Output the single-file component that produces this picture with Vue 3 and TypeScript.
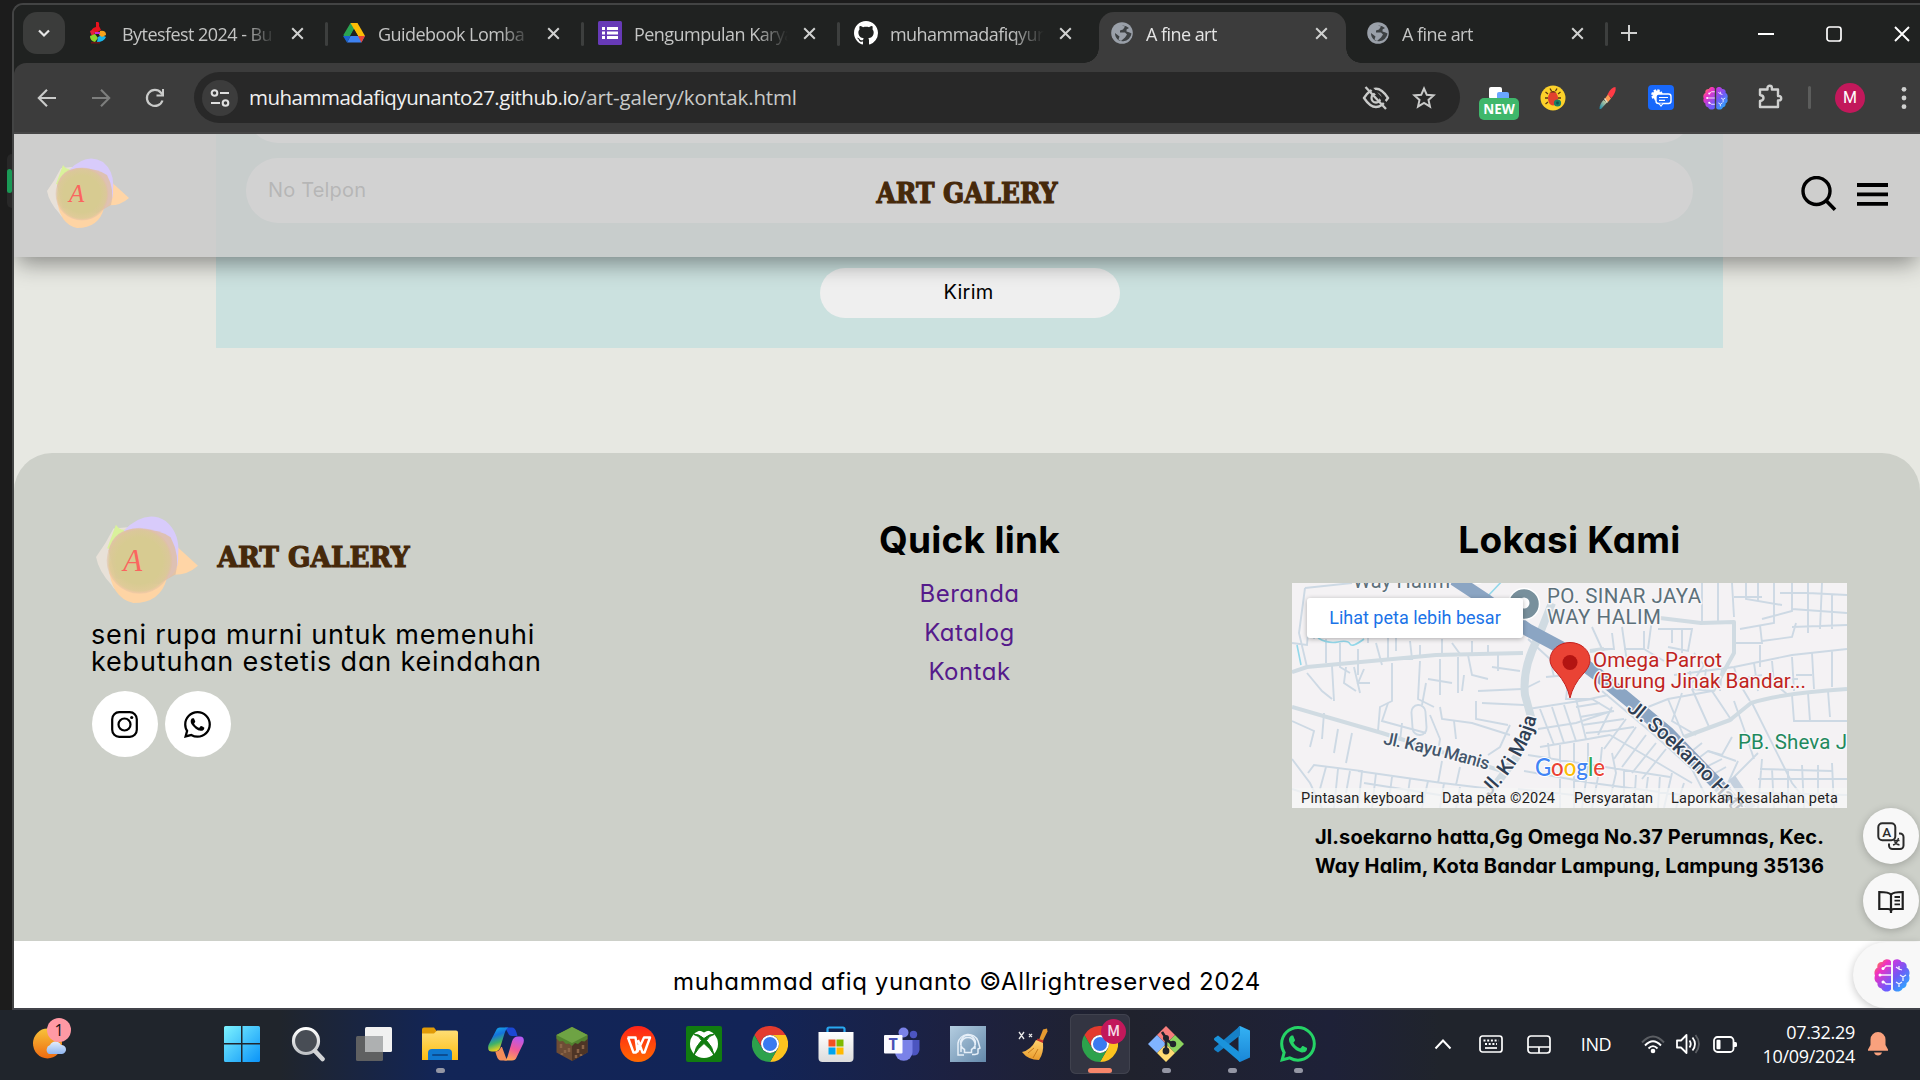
<script setup lang="ts">
interface Tab {
  title: string
  icon: string
  active?: boolean
}
interface TaskItem {
  icon: string
  state?: 'open' | 'active'
}

const tabs: Tab[] = [
  { title: 'Bytesfest 2024 - Bu', icon: 'bytes' },
  { title: 'Guidebook Lomba', icon: 'drive' },
  { title: 'Pengumpulan Karya', icon: 'forms' },
  { title: 'muhammadafiqyun', icon: 'github' },
  { title: 'A fine art', icon: 'globe', active: true },
  { title: 'A fine art', icon: 'globe' },
]

const links: string[] = ['Beranda', 'Katalog', 'Kontak']

const taskItems: TaskItem[] = [
  { icon: 'windows' },
  { icon: 'lens' },
  { icon: 'taskview' },
  { icon: 'explorer', state: 'open' },
  { icon: 'copilot' },
  { icon: 'minecraft' },
  { icon: 'wps' },
  { icon: 'xbox' },
  { icon: 'chrome' },
  { icon: 'store' },
  { icon: 'teams' },
  { icon: 'portrait' },
  { icon: 'broom' },
  { icon: 'chrome', state: 'active' },
  { icon: 'git', state: 'open' },
  { icon: 'vscode', state: 'open' },
  { icon: 'whatsapp', state: 'open' },
]

const mapStreets: string[] = [
  'M13 5L60 0M13 5L7 50L15 84L0 89M24 20L22 56M0 60L15 62L16 50M34 56V80M48 60V84L58 90M66 66V92M76 54V60',
  'M84 60L90 82M96 54V76H120L118 58M104 54V68M128 62V73M150 56V71M160 60L168 71M180 58V70M196 62V69',
  'M15 90L30 108L40 116M40 83L42 118M54 84L52 100L64 108M62 84L68 110M72 86L66 100H78M100 80V118L88 124L86 148M128 78L126 116L142 124M148 76V112M136 96L160 100M176 72L180 92L196 96M186 108L230 106M190 120L232 122M184 118V136L216 142',
  'M96 120L90 138L134 150M138 132L148 156L146 170M148 124L150 136L180 140L218 152M162 138L164 156M218 142L208 164L196 172M130 122L134 100M110 140L108 158M166 74V110M200 84L228 88M206 72V88M172 92L170 108',
  'M32 130L30 156M0 138L22 148L18 164M46 146L42 170M60 150L54 180M0 176L18 200L30 225M16 190L22 182L70 188L66 225M34 184L28 206M46 186L42 225M58 188L54 210',
  'M66 188L150 200L200 206M72 200L160 214L196 222M84 190L80 225M100 194L96 225M118 196L114 225M136 198L130 225M152 200L148 225M168 204L164 225M0 206L24 214L60 218M150 178L146 200M168 184L164 202',
  'M236 126L300 116L320 128L284 140L246 146M248 126L262 162M260 124L272 160M272 122L284 158M284 116L294 156M248 164L296 156L318 152M284 124L308 120M288 134L322 128M290 142L332 136M294 150L316 148L342 144',
  'M276 98L274 116L298 116L316 112M254 94L276 92M232 106L248 98M236 56L258 76L262 94M310 108L360 150L400 186L420 225M320 124L306 152M334 136L312 166M344 144L322 176M354 152L330 184M364 160L340 190M374 166L350 196M318 152L366 180L400 200',
  'M256 160L258 178M268 162V225M282 160V225M296 160V184L290 225M310 164L308 184L300 225M320 170L324 190L316 225M332 186V225M344 192L342 225M356 194L352 225M368 192L366 225M236 172L300 182L378 194M232 188L300 200L390 212M226 206L300 214M380 190L372 225M392 200L384 225',
  'M300 44L310 66H322L320 50M330 44L336 86M332 66H352M318 66L298 68M352 48V66L372 78M360 36L356 66M366 46H400L396 68L376 64M390 46V70M380 46V60M410 0V38M402 70L412 82L400 100',
  'M426 0V38M440 0L442 34M442 14H470M454 0V16L490 22M466 0V18M482 0V40L448 46M500 0V28L470 36M516 0V50M530 0L528 46M488 10H516M500 26L555 30M516 10L555 12M540 12V46M442 60H470L468 42M470 58L500 54L504 40M500 44L555 42M468 62V84',
  'M382 92L442 84L500 72L555 66M398 88L400 106L422 108M414 86L412 102M430 84L428 108M442 84L446 98L458 118M462 80L466 108M480 78L482 100L496 112M500 74L502 108M520 70L522 106M540 68V104M484 96H506M504 92H520M446 96L470 92',
  'M500 112L502 138H555M516 110L518 138M536 108L538 134M376 116L392 154M390 110L380 138L404 152M400 106L418 146M356 124L376 116L420 108M420 108L440 138M442 118L452 146L462 176M460 120L500 200L520 225M440 154L430 172L416 168M446 178L436 200L466 170',
  'M470 176L466 225M480 186L482 225M496 186V225M510 182L512 225M526 182V210M540 180L542 225M466 196H555M464 210L555 212M400 180L416 168L444 178M410 186L430 176M420 192L434 184M436 200L446 225M468 186L540 188M395 172L410 160',
]
</script>

<template>
  <div class="desktop">
    <svg class="defs" width="0" height="0" aria-hidden="true">
      <defs>
        <linearGradient id="gWin" x1="0" y1="0" x2="1" y2="1"><stop offset="0" stop-color="#7df3ff" /><stop offset="1" stop-color="#0a93f8" /></linearGradient>
        <linearGradient id="gLens" x1="0" y1="0" x2="0" y2="1"><stop offset="0" stop-color="#fff" /><stop offset="1" stop-color="#bfc2c6" /></linearGradient>
        <linearGradient id="gFolder" x1="0" y1="0" x2="0" y2="1"><stop offset="0" stop-color="#ffde74" /><stop offset="1" stop-color="#fbbd12" /></linearGradient>
        <linearGradient id="gWps" x1="0" y1="0" x2="0" y2="1"><stop offset="0" stop-color="#ff2318" /><stop offset="1" stop-color="#ff6a00" /></linearGradient>
        <linearGradient id="gBrainL" x1="0" y1="0" x2=".6" y2="1"><stop offset="0" stop-color="#ff9a1f" /><stop offset=".4" stop-color="#f02fc2" /><stop offset="1" stop-color="#6a5cff" /></linearGradient>
        <linearGradient id="gBrainR" x1="0" y1="0" x2=".5" y2="1"><stop offset="0" stop-color="#d235dd" /><stop offset=".5" stop-color="#7159f5" /><stop offset="1" stop-color="#2fa4ff" /></linearGradient>
        <linearGradient id="gCopA" x1="0" y1="0" x2=".3" y2="1"><stop offset="0" stop-color="#13b7ee" /><stop offset=".4" stop-color="#1673dd" /><stop offset=".7" stop-color="#3fb268" /><stop offset="1" stop-color="#f2d21a" /></linearGradient>
        <linearGradient id="gCopB" x1=".6" y1="0" x2=".3" y2="1"><stop offset="0" stop-color="#b659f2" /><stop offset=".5" stop-color="#f0589a" /><stop offset="1" stop-color="#ffa552" /></linearGradient>
        <linearGradient id="gSun" x1="0" y1="0" x2="0" y2="1"><stop offset="0" stop-color="#f8c33a" /><stop offset="1" stop-color="#ee6a10" /></linearGradient>
        <linearGradient id="gCloud" x1="0" y1="0" x2="0" y2="1"><stop offset="0" stop-color="#e4eefc" /><stop offset="1" stop-color="#8fb6f0" /></linearGradient>
        <linearGradient id="gPort" x1="0" y1="0" x2="1" y2="1"><stop offset="0" stop-color="#b4cde0" /><stop offset="1" stop-color="#6489ab" /></linearGradient>
        <linearGradient id="gBrush" x1="1" y1="0" x2="0" y2="1"><stop offset="0" stop-color="#e8d9a0" /><stop offset="1" stop-color="#1387a8" /></linearGradient>
        <linearGradient id="gStore" x1="0" y1="0" x2="0" y2="1"><stop offset="0" stop-color="#fff" /><stop offset="1" stop-color="#dcdcdc" /></linearGradient>
        <linearGradient id="gBroom" x1="0" y1="0" x2="0" y2="1"><stop offset="0" stop-color="#ffd36e" /><stop offset="1" stop-color="#e99b2c" /></linearGradient>
        <linearGradient id="gCode" x1="0" y1="0" x2="0" y2="1"><stop offset="0" stop-color="#34b2f4" /><stop offset="1" stop-color="#1a86d6" /></linearGradient>
        <radialGradient id="gCore"><stop offset=".7" stop-color="#d7cb91" /><stop offset=".92" stop-color="#dac996" stop-opacity=".85" /><stop offset="1" stop-color="#e2bda4" stop-opacity=".4" /></radialGradient>
        <symbol id="brain" viewBox="0 0 36 34">
          <path d="M17 3.500C16 .8 10 .2 8.500 4 5 3.500 2.500 6.500 3.500 9.500.500 11-.2 15 1 17.500-.2 21 1 24 3.500 25c-.7 3.500 2 5.500 4 5.500 1.500 4 8 4 9.500.8z" fill="url(#gBrainL)" />
          <path d="M19 3.500C20 .8 26 .2 27.500 4 31 3.500 33.500 6.500 32.500 9.500c3 1.500 3.700 5.500 2.500 8 1.200 3.500 0 6.500-2.500 7.500.7 3.500-2 5.500-4 5.500-1.500 4-8 4-9.500.8z" fill="url(#gBrainR)" />
          <g fill="none" stroke="#fff" stroke-opacity=".9" stroke-width="1.300">
            <path d="M17 8h-5l-3 3M17 17H6M17 26h-5l-3-3M22 9l3 2v-3m0 3 3 1M26 17l3 2 3-2m-3 2v4M22 24l3 2 3-2m-3 2v3" />
          </g>
          <g fill="#fff"><circle cx="9" cy="10.500" r="1.500" /><circle cx="6" cy="17" r="1.500" /><circle cx="9" cy="24" r="1.500" /></g>
        </symbol>
        <symbol id="chromeLogo" viewBox="0 0 48 48">
          <path d="M3.200 12A24 24 0 0 1 44.800 12H24A12 12 0 0 0 13.600 30z" fill="#e33b2e" />
          <path d="M44.800 12A24 24 0 0 1 24 48L34.400 30A12 12 0 0 0 24 12z" fill="#fcc31e" />
          <path d="M24 48A24 24 0 0 1 3.200 12L13.600 30A12 12 0 0 0 34.400 30z" fill="#2da24c" />
          <circle cx="24" cy="24" r="12" fill="#fff" /><circle cx="24" cy="24" r="9.400" fill="#3a7af0" />
        </symbol>
        <symbol id="blob" viewBox="0 0 82 70">
          <path d="M0 33Q8 22 14 10L36 8 34 60Q18 66 12 55Q2 44 0 33z" fill="#ece4da" opacity=".85" />
          <path d="M9 26L16 7Q20 13 26 10L20 30z" fill="#d9f29b" />
          <path d="M60 20L82 40Q72 49 58 47z" fill="#ffd5a6" />
          <path d="M22 12Q40-6 56 4Q68 14 66 32Q67 44 58 50Q40 20 22 12z" fill="#d8cbfb" />
          <path d="M10 40Q12 66 30 70Q52 70 57 50L50 30L14 30z" fill="#fed4a4" />
          <path d="M10 28Q14 10 34 10Q52 11 60 17Q68 32 64 47L50 55L16 50Z" fill="#dfbfa6" opacity=".85" />
          <circle cx="35" cy="36" r="26.500" fill="url(#gCore)" />
          <text x="22" y="44" font-family="'Liberation Serif', serif" font-style="italic" font-size="25" fill="#fb655f">A</text>
        </symbol>
        <symbol id="whatsappMark" viewBox="0 0 16 16">
          <path d="M13.601 2.326A7.85 7.850 0 0 0 7.994 0C3.627 0 .068 3.558.064 7.926c0 1.399.366 2.760 1.057 3.965L0 16l4.204-1.102a7.900 7.900 0 0 0 3.790.965h.004c4.368 0 7.926-3.558 7.930-7.930A7.900 7.900 0 0 0 13.600 2.326zM7.994 14.521a6.600 6.600 0 0 1-3.356-.92l-.24-.144-2.494.654.666-2.433-.156-.251a6.560 6.560 0 0 1-1.007-3.505c0-3.626 2.957-6.584 6.591-6.584a6.560 6.560 0 0 1 4.660 1.931 6.560 6.560 0 0 1 1.928 4.660c-.004 3.639-2.961 6.592-6.592 6.592m3.615-4.934c-.197-.099-1.170-.578-1.353-.646-.182-.065-.315-.099-.445.099-.133.197-.513.646-.627.775-.114.133-.232.148-.43.050-.197-.1-.836-.308-1.592-.985-.59-.525-.985-1.175-1.103-1.372-.114-.198-.011-.304.088-.403.087-.088.197-.232.296-.346.1-.114.133-.198.198-.33.065-.134.034-.248-.015-.347-.05-.099-.445-1.076-.612-1.470-.16-.389-.323-.335-.445-.34-.114-.007-.247-.007-.38-.007a.73.730 0 0 0-.529.247c-.182.198-.691.677-.691 1.654s.71 1.916.81 2.049c.098.133 1.394 2.132 3.383 2.992.47.205.84.326 1.129.418.475.152.904.129 1.246.080.38-.058 1.171-.48 1.338-.943.164-.464.164-.86.114-.943-.049-.084-.182-.133-.38-.232" />
        </symbol>
      </defs>
    </svg>

    <div class="upper">
      <div class="edge"><span class="edge-box"><i></i></span></div>
      <div class="window">
        <div class="tabstrip">
          <span class="tabsearch"><svg width="14" height="14" viewBox="0 0 14 14"><path d="M2 4.500l5 5 5-5" fill="none" stroke="#e6e6e6" stroke-width="2.200" /></svg></span>
          <div class="tabs">
            <div v-for="(t, i) in tabs" :key="i" class="tab" :class="{ active: t.active, nosep: t.active || tabs[i + 1]?.active }">
              <div v-if="t.active" class="tab-bg"></div>
              <span class="fav">
                <svg v-if="t.icon === 'bytes'" width="18" height="22" viewBox="0 0 18 22">
                  <path d="M7 0q4-1 3 4l2 4-5 3-5 0q0-5 5-6z" fill="#e8121d" />
                  <path d="M1 9q3-2 5 1l-1 5q-3-1-4-6z" fill="#e3203a" />
                  <path d="M1 14l5-2 3 4-3 4q-5-1-5-6z" fill="#8bd42b" />
                  <path d="M9 15l4-2 4 2q-2 5-9 5z" fill="#19b6ea" />
                  <path d="M11 9q6-1 6 4l-4 2-3-2z" fill="#f5a21a" />
                  <path d="M6 10h5v2H6z" fill="#c72bd2" /><path d="M2 20h9v1.500H2z" fill="#6c1717" />
                </svg>
                <svg v-else-if="t.icon === 'drive'" width="22" height="20" viewBox="0 0 22 20">
                  <path d="M7.500 0h7l-3.600 6.200L4 18.500.4 12z" fill="#2aa352" />
                  <path d="M7.500 0h7L22 13h-7z" fill="#fdbd05" /><path d="M4 19.500L7.500 13H22l-3.600 6.500z" fill="#3e82f1" />
                  <path d="M15 13h7l-3.600 6.500z" fill="#ea4435" /><path d="M0 13h7.500L4 19.500z" fill="#1b63d0" /><path d="M11 6.200L15 13H7.200z" fill="#202221" />
                </svg>
                <svg v-else-if="t.icon === 'forms'" width="24" height="24" viewBox="0 0 24 24">
                  <rect width="24" height="24" rx="1.500" fill="#673ab7" />
                  <path d="M4 6h3v3H4zM9 6h11v3H9zM4 10.500h3v3H4zM9 10.500h11v3H9zM4 15h3v3H4zM9 15h11v3H9z" fill="#fff" />
                </svg>
                <svg v-else-if="t.icon === 'github'" width="24" height="24" viewBox="0 0 16 16">
                  <path fill="#fff" d="M8 0C3.580 0 0 3.580 0 8c0 3.540 2.290 6.530 5.470 7.590.4.070.55-.17.55-.38 0-.19-.01-.82-.01-1.490-2.010.37-2.530-.49-2.690-.94-.09-.23-.48-.94-.82-1.130-.28-.15-.68-.52-.01-.53.63-.01 1.080.58 1.230.82.72 1.210 1.870.87 2.330.66.070-.52.28-.87.51-1.070-1.780-.2-3.640-.89-3.640-3.950 0-.87.31-1.590.82-2.150-.08-.2-.36-1.020.08-2.120 0 0 .67-.21 2.200.82.64-.18 1.320-.27 2-.27s1.360.09 2 .27c1.530-1.040 2.200-.82 2.200-.82.44 1.100.16 1.920.08 2.120.51.56.82 1.270.82 2.150 0 3.070-1.870 3.750-3.650 3.950.29.25.54.73.54 1.480 0 1.070-.01 1.930-.01 2.200 0 .21.15.46.55.38A8.010 8.010 0 0 0 16 8c0-4.420-3.580-8-8-8z" />
                </svg>
                <svg v-else width="22" height="22" viewBox="0 0 22 22">
                  <circle cx="11" cy="11" r="10.800" fill="#9aa0a9" />
                  <path d="M11 3.500l3 1-2 3-3 1v2h5l2 2-2 3-4 3.500-2.500-1.500 1-3-4.500-3.500a8.500 8.500 0 0 0 4 7.500q2 1 4.500.8a9 9 0 0 0 8-7.800l-2-1-3-1 0-2 2.500-1.500A9 9 0 0 0 11 3.500z" fill="#35383b" opacity=".92" />
                </svg>
              </span>
              <span class="tab-title">{{ t.title }}</span>
              <svg class="tab-x" width="13" height="13" viewBox="0 0 13 13"><path d="M1.200 1.200l10.600 10.600M11.800 1.200L1.200 11.800" stroke="currentColor" stroke-width="2" /></svg>
            </div>
          </div>
          <svg class="plus" width="16" height="16" viewBox="0 0 16 16"><path d="M8 0v16M0 8h16" stroke="#d0d1d0" stroke-width="2" /></svg>
          <div class="winctl">
            <svg width="16" height="16" viewBox="0 0 16 16"><path d="M0 8h16" stroke="#fff" stroke-width="2" /></svg>
            <svg width="16" height="16" viewBox="0 0 16 16"><rect x="1" y="1" width="14" height="14" rx="2.500" fill="none" stroke="#fff" stroke-width="1.700" /></svg>
            <svg width="16" height="16" viewBox="0 0 16 16"><path d="M1 1l14 14M15 1L1 15" stroke="#fff" stroke-width="1.900" /></svg>
          </div>
        </div>

        <div class="toolbar">
          <div class="navs">
            <svg width="20" height="20" viewBox="0 0 20 20"><path d="M19 10H2.500M10 1.800L1.800 10 10 18.200" fill="none" stroke="#cacbca" stroke-width="2.100" /></svg>
            <svg width="20" height="20" viewBox="0 0 20 20"><path d="M1 10h16.500M10 1.800l8.200 8.200-8.200 8.200" fill="none" stroke="#7d7e7d" stroke-width="2.100" /></svg>
            <svg width="20" height="20" viewBox="0 0 20 20"><path d="M17.500 12.500A8 8 0 1 1 16 4.700L18 7" fill="none" stroke="#cacbca" stroke-width="2.200" /><path d="M19 1v7.500h-7.500v-2H17V1z" fill="#cacbca" /></svg>
          </div>
          <div class="omnibox">
            <span class="siteinfo"><svg width="20" height="20" viewBox="0 0 20 20" fill="none" stroke="#e0e0e0" stroke-width="2.100"><circle cx="4.500" cy="5" r="2.800" /><path d="M10 5h9M1 15h9" /><circle cx="15.500" cy="15" r="2.800" /></svg></span>
            <span class="url"><b>muhammadafiqyunanto27.github.io</b><i>/art-galery/kontak.html</i></span>
            <svg class="eye" width="28" height="24" viewBox="0 0 28 24" fill="none" stroke="#c9cac9" stroke-width="2.300"><path d="M2 12Q14-6.500 26 12Q14 30 2 12z" /><circle cx="14" cy="12" r="4.500" /><path d="M7.200-.5L26.500 20" stroke="#282828" stroke-width="2.600" /><path d="M3.500 1L24 23" /></svg>
            <svg width="24" height="24" viewBox="0 0 24 24"><path d="M12 2.500l2.800 6.300 6.800.6-5.100 4.500 1.500 6.700L12 17l-6 3.600 1.500-6.700-5.100-4.500 6.800-.6z" fill="none" stroke="#c9cac9" stroke-width="2" /></svg>
          </div>
          <div class="exts">
            <span class="newext">
              <svg width="22" height="14" viewBox="0 0 22 14"><rect x="1" y="0" width="13" height="12" rx="2" fill="#fff" /><rect x="9" y="5" width="12" height="10" rx="2" fill="#6aa6ff" /></svg>
              <b>NEW</b>
            </span>
            <svg width="26" height="26" viewBox="0 0 26 26"><circle cx="13" cy="13" r="12.500" fill="#fcd12a" /><path d="M8 9l-2.500-2m2.500 6H5m3 4l-2.500 2M18 9l2.500-2m-2.500 6h3m-9.500-7-1.500-2.500m5.500 2.500 1.500-2.500" stroke="#5c3613" stroke-width="1.300" /><ellipse cx="13" cy="13.500" rx="5" ry="7" fill="#e2412e" /><path d="M9.500 7.500a4 3 0 0 1 7 0z" fill="#5d3212" /><circle cx="17.500" cy="18" r="3.600" fill="#1a7f63" /><circle cx="17.500" cy="18" r="1.400" fill="#0f4f50" /></svg>
            <svg width="20" height="24" viewBox="0 0 20 24"><path d="M17.500 1q1 5-4 11l-4-3.500Q13 1 17.500 1z" fill="#ff3a45" /><path d="M13 12.500l-3 3.500-3-3.500 3-4z" fill="#ff9a55" /><path d="M9 16.500L3 23H1.500q0-5 4-9z" fill="url(#gBrush)" /><path d="M6 13l3 4 1-1-3-4z" fill="#efe9c8" /></svg>
            <svg width="26" height="25" viewBox="0 0 26 25"><rect width="26" height="25" rx="4" fill="#1868fb" /><circle cx="9" cy="10" r="4.500" fill="#fff" stroke="#fff" stroke-width="2.600" stroke-dasharray="2.200 1.300" /><rect x="8" y="9" width="15" height="9.500" rx="2.500" fill="#1868fb" stroke="#fff" stroke-width="1.400" /><path d="M11 12.500h9M11 15.300h6" stroke="#fff" stroke-width="1.200" /><path d="M11 18.500l2 2.500 2-2.500" fill="#1868fb" stroke="#fff" stroke-width="1.200" /></svg>
            <svg width="25" height="24"><use href="#brain" /></svg>
            <svg width="26" height="26" viewBox="0 0 26 26"><path d="M3 6.500h7.500V5a2.200 2.200 0 0 1 4.400 0v1.500H21V13h1a2.200 2.200 0 0 1 0 4.400h-1V24H3v-6q3.500-.5 3.500-3T3 12z" fill="none" stroke="#cfd0cf" stroke-width="2.400" stroke-linejoin="round" /></svg>
          </div>
          <span class="tsep"></span>
          <span class="avatar">M</span>
          <svg class="dots" width="6" height="24" viewBox="0 0 6 24" fill="#cfd0cf"><circle cx="3" cy="3.300" r="2.400" /><circle cx="3" cy="12" r="2.400" /><circle cx="3" cy="20.700" r="2.400" /></svg>
        </div>

        <div class="page">
          <header class="site-head">
            <svg class="head-logo" width="82" height="70"><use href="#blob" /></svg>
            <svg class="head-name" width="184" height="26" viewBox="0 0 184 26"><text x="1.500" y="22" textLength="181" lengthAdjust="spacingAndGlyphs">ART GALERY</text></svg>
            <div class="head-icons">
              <svg width="36" height="36" viewBox="0 0 36 36"><circle cx="15.500" cy="15" r="13.500" fill="none" stroke="#000" stroke-width="3.400" /><path d="M25 24.500l9 9.300" stroke="#000" stroke-width="3.600" /></svg>
              <svg width="31" height="23" viewBox="0 0 31 23"><path d="M0 2h31M0 11.400h31M0 20.800h31" stroke="#000" stroke-width="3.800" /></svg>
            </div>
          </header>

          <section class="form">
            <div class="field first"></div>
            <div class="field">No Telpon</div>
            <button class="send">Kirim</button>
          </section>

          <footer class="foot">
            <div class="brand">
              <div class="brand-row">
                <svg width="102" height="87"><use href="#blob" /></svg>
                <svg class="brand-name" width="196" height="28" viewBox="0 0 196 28"><text x="1.500" y="24.500" textLength="192" lengthAdjust="spacingAndGlyphs">ART GALERY</text></svg>
              </div>
              <p>seni rupa murni untuk memenuhi<br />kebutuhan estetis dan keindahan</p>
              <div class="socials">
                <span><svg width="27" height="27" viewBox="0 0 27 27" fill="none" stroke="#000" stroke-width="2.200"><rect x="1.200" y="1.200" width="24.600" height="24.600" rx="7" /><circle cx="13.500" cy="13.500" r="6" /><circle cx="20.700" cy="6.500" r="1.600" fill="#000" stroke="none" /></svg></span>
                <span><svg width="27" height="27"><use href="#whatsappMark" /></svg></span>
              </div>
            </div>
            <div class="quick">
              <h2>Quick link</h2>
              <a v-for="l in links" :key="l">{{ l }}</a>
            </div>
            <div class="place">
              <h2>Lokasi Kami</h2>
              <div class="map">
                <svg width="555" height="225" viewBox="0 0 555 225" font-family="Roboto, sans-serif">
                  <rect width="555" height="225" fill="#f4f2f4" />
                  <g fill="none" stroke="#cdd9e4" stroke-width="1.900">
                    <path v-for="(s, i) in mapStreets" :key="i" :d="s" />
                    <rect x="120" y="122" width="14" height="30" rx="7" transform="rotate(-4 127 137)" />
                  </g>
                  <path d="M26 55q10 6 20 4t12 2 14-5M5 62l4 20M195 14L212-4" fill="none" stroke="#93d8ea" stroke-width="1.600" />
                  <g fill="none" stroke="#d0dbe2" stroke-linejoin="round">
                    <path d="M260 20L246 55Q230 85 233 112L239 134L226 172L196 212" stroke-width="8" />
                    <path d="M0 124L90 150L210 188M392 154L438 137L459 120Q490 110 555 106M368 35L409 40L442 39V70L421 108M0 89L15 84L144 72L231 70M298 68L312 66" stroke-width="4" />
                  </g>
                  <path d="M162-4L194 17L236 47L268 64L306 92L340 120L376 150L430 206L450 229" fill="none" stroke="#8ba5c3" stroke-width="13" />
                  <path d="M440 195L460 225" stroke="#c4d0de" stroke-width="8" />
                  <g class="halo">
                    <text x="61" y="5" font-size="20" textLength="97" fill="#5c707a">Way Halim</text>
                    <text x="255" y="20" font-size="20.500" textLength="154" fill="#5c707a">PO. SINAR JAYA</text>
                    <text x="255" y="41" font-size="20.500" textLength="114" fill="#5c707a">WAY HALIM</text>
                    <text x="301" y="84" font-size="20.500" textLength="129" fill="#c02320">Omega Parrot</text>
                    <text x="301" y="105" font-size="20.500" textLength="213" fill="#c02320">(Burung Jinak Bandar...</text>
                    <text x="446" y="166" font-size="20.500" fill="#1f8a5e" textLength="109">PB. Sheva J</text>
                    <g font-size="17.500" font-weight="500" fill="#44566b">
                      <path id="kayu" d="M91 161Q142 171 200 188" fill="none" stroke="none" />
                      <text><textPath href="#kayu" textLength="108">Jl. Kayu Manis</textPath></text>
                    </g>
                    <g font-size="20" font-weight="500" fill="#2f3f54">
                      <path id="maja" d="M197 214Q238 172 246 128" fill="none" stroke="none" />
                      <text><textPath href="#maja" textLength="94">Jl. Ki Maja</textPath></text>
                      <path id="soek" d="M334 127Q392 172 452 240" fill="none" stroke="none" />
                      <text><textPath href="#soek" textLength="162">Jl. Soekarno Hatta</textPath></text>
                    </g>
                  </g>
                  <path d="M178-4a9 9 0 0 0 15 0z" fill="#8a9da6" stroke="#fff" stroke-width="2" />
                  <circle cx="232" cy="21" r="15.500" fill="#78909c" stroke="#fff" stroke-width="1.500" /><circle cx="232" cy="20" r="5.500" fill="#fff" />
                  <path d="M278 115Q275 101 265 90Q258 83 258 77A20 17.500 0 0 1 298 77Q298 84 291 91Q281 102 278 115z" fill="#ea4335" stroke="#c5221f" />
                  <circle cx="278" cy="79.500" r="7.500" fill="#b31412" />
                  <text x="243" y="193" font-size="24" textLength="70" lengthAdjust="spacingAndGlyphs" class="google"><tspan fill="#4285f4">G</tspan><tspan fill="#ea4335">o</tspan><tspan fill="#fbbc04">o</tspan><tspan fill="#4285f4">g</tspan><tspan fill="#34a853">l</tspan><tspan fill="#ea4335">e</tspan></text>
                  <rect y="205" width="555" height="20" fill="#f5f5f5" opacity=".72" />
                  <g font-size="14.500" fill="#222">
                    <text x="9" y="220" textLength="123">Pintasan keyboard</text>
                    <text x="150" y="220" textLength="113">Data peta ©2024</text>
                    <text x="282" y="220" textLength="79">Persyaratan</text>
                    <text x="379" y="220" textLength="167">Laporkan kesalahan peta</text>
                  </g>
                </svg>
                <span class="bigger">Lihat peta lebih besar</span>
              </div>
              <p>Jl.soekarno hatta,Gg Omega No.37 Perumnas, Kec.<br />Way Halim, Kota Bandar Lampung, Lampung 35136</p>
            </div>
          </footer>
          <div class="copy">muhammad afiq yunanto ©Allrightreserved 2024</div>

          <div class="floaters">
            <span class="fl"><svg width="28" height="29" viewBox="0 0 28 29" fill="none" stroke="#2b2b2b" stroke-width="2"><path d="M12 21.500v2a3.500 3.500 0 0 0 3.500 3.500h7.500a3.500 3.500 0 0 0 3.500-3.500V15a3.500 3.500 0 0 0-3.500-3.500h-1" /><rect x="1.300" y="1.300" width="17" height="17" rx="4" /><text x="9.800" y="14.700" text-anchor="middle" font-family="Roboto, sans-serif" font-size="13.500" font-weight="500" fill="#2b2b2b" stroke="none">A</text><path d="M16.500 18.500h6M21.500 16q-1.500 6-5.500 7M17.500 19.500q2 3 5 3.500" stroke-width="1.400" /></svg></span>
            <span class="fl book"><svg width="26" height="24" viewBox="0 0 26 24" fill="none" stroke="#1f1f1f" stroke-width="2.200"><path d="M13 4.500Q11 2 1.300 2v17H10q3 0 3 2.500M13 4.500Q15 2 24.700 2v17H16q-3 0-3 2.500M13 4v19" /><path d="M16.500 7h5.500M16.500 10.700h5.500M16.500 14.400h5.500" stroke-width="1.800" /></svg></span>
            <span class="fl big"><svg width="36" height="34"><use href="#brain" /></svg></span>
          </div>
        </div>
      </div>
    </div>

    <div class="taskbar">
      <div class="weather">
        <svg width="34" height="32" viewBox="0 0 34 32"><ellipse cx="14.500" cy="15.500" rx="14.500" ry="15" fill="url(#gSun)" /><path d="M16 26a5 5 0 0 1 1-9 6 6 0 0 1 11 0 4.500 4.500 0 0 1 1 9z" fill="url(#gCloud)" /></svg>
        <b>1</b>
      </div>
      <div class="tasks">
        <span v-for="(a, i) in taskItems" :key="i" class="task" :class="a.state">
          <svg v-if="a.icon === 'windows'" width="36" height="36" viewBox="0 0 36 36"><path d="M1.500 0H17v17H0V1.500A1.500 1.500 0 0 1 1.500 0zM18.500 0h16A1.500 1.500 0 0 1 36 1.500V17H18.500zM0 18.500h17V36H1.500A1.500 1.500 0 0 1 0 34.500zM18.500 18.500H36v16a1.500 1.500 0 0 1-1.500 1.500h-16z" fill="url(#gWin)" /></svg>
          <svg v-else-if="a.icon === 'lens'" width="36" height="36" viewBox="0 0 36 36"><circle cx="16" cy="15" r="12.500" fill="#484d55" stroke="url(#gLens)" stroke-width="3.200" /><path d="M25 25l7.500 8" stroke="#d2d4d6" stroke-width="4.600" stroke-linecap="round" /></svg>
          <svg v-else-if="a.icon === 'taskview'" width="36" height="36" viewBox="0 0 36 36"><rect x="0" y="10" width="27" height="25" rx="1.500" fill="#5f6061" /><rect x="9" y="1" width="27" height="25" rx="1.500" fill="#f1f1f1" /><path d="M9 10h18v16H9z" fill="#aeb0b1" /></svg>
          <svg v-else-if="a.icon === 'explorer'" width="36" height="36" viewBox="0 0 36 36"><path d="M0 3.500A2 2 0 0 1 2 1.500h10l3 4-3 4H0z" fill="#e19b07" /><path d="M0 7.500h12l3-3h19a2 2 0 0 1 2 2V34H0z" fill="url(#gFolder)" /><path d="M6 34v-7a4 4 0 0 1 4-4h16a4 4 0 0 1 4 4v7z" fill="#0f78cf" /><path d="M11 29h14" stroke="#0b4d91" stroke-width="2" stroke-linecap="round" /></svg>
          <svg v-else-if="a.icon === 'copilot'" width="36" height="36" viewBox="0 0 36 36"><path d="M17 1.500h7q3 0 4.500 5l1 3.500H24q-3 0-4-3z" fill="#1b48d4" /><path d="M8 4.500Q9 1.500 12 1.500h8.500q-2.500 1-4 6l-4 13q-1.500 5-6 5H4Q-1 25.500.5 19z" fill="url(#gCopA)" /><path d="M28.500 31.500Q27.500 34.500 24 34.500h-8q3-1 4-5.500l4-13.500q1.500-5 6-5h2Q37 10.500 35.500 17z" fill="url(#gCopB)" /><path d="M19 34.500h-6q-3 0-4.500-5L7.300 25.500q4 0 5.700-4.500l1 0z" fill="#f58d5a" /></svg>
          <svg v-else-if="a.icon === 'minecraft'" width="36" height="36" viewBox="0 0 36 36"><path d="M18 1l15.500 8v17.500L18 35 2.500 26.500V9z" fill="#6d4c35" /><path d="M18 17.500V35l15.500-8.500V9z" fill="#4e3526" /><path d="M18 1l15.500 8v4l-3 2.500-3-.5-3.500 3-3-1L18 20l-3-2.500-3 .5-3-3-3.500.5-3-3V9z" fill="#52832f" /><path d="M18 1l15.500 8L18 17 2.500 9z" fill="#6ea344" /><path d="M7 18v4m4 2v3m4-5v4m-7 3v-2m16-4v4m5-8v4m-2 5v2m-5 2v-3" stroke="#8a6447" stroke-width="2.500" /></svg>
          <svg v-else-if="a.icon === 'wps'" width="36" height="36" viewBox="0 0 36 36"><circle cx="18" cy="18" r="18" fill="url(#gWps)" /><path d="M7.500 11.500h8l2 14L24 11.500h6L24.500 26.500h-2L18 14M8 11.500l5.500 15h2.500l4-9" fill="none" stroke="#fff" stroke-width="2.400" stroke-linejoin="round" /></svg>
          <svg v-else-if="a.icon === 'xbox'" width="36" height="36" viewBox="0 0 36 36"><rect width="36" height="36" rx="2" fill="#117c10" /><circle cx="18" cy="18" r="14" fill="#fff" /><path d="M8 8.500Q12 7.500 18 12.500Q24 7.500 28 8.500Q23 9.500 20.500 14.500Q27 21 28 29Q24 22 18 17.500Q12 22 8 29Q9 21 15.500 14.500Q13 9.500 8 8.500z" fill="#117c10" stroke="#117c10" stroke-width="1" /><path d="M12 4.500q4 .5 6 2 2-1.500 6-2-6-2-12 0z" fill="#117c10" /></svg>
          <svg v-else-if="a.icon === 'chrome'" width="36" height="36"><use href="#chromeLogo" /></svg>
          <svg v-else-if="a.icon === 'store'" width="36" height="36" viewBox="0 0 36 36"><path d="M9.500 8V3a1.500 1.500 0 0 1 1.500-1.500h14A1.500 1.500 0 0 1 26.500 3v5" fill="none" stroke="#28a8f0" stroke-width="2.200" /><path d="M.5 6h35v26a4 4 0 0 1-4 4h-27a4 4 0 0 1-4-4z" fill="url(#gStore)" /><path d="M10.500 13.500h7v7h-7z" fill="#f25022" /><path d="M18.500 13.500h7v7h-7z" fill="#7fba00" /><path d="M10.500 21.500h7v7h-7z" fill="#00a4ef" /><path d="M18.500 21.500h7v7h-7z" fill="#ffb900" /></svg>
          <svg v-else-if="a.icon === 'teams'" width="36" height="36" viewBox="0 0 36 36"><circle cx="29.500" cy="8.500" r="3.700" fill="#4c55c0" /><path d="M23 14h12.500v10q-1 6-7 5.500z" fill="#4c55c0" /><circle cx="19.500" cy="6.500" r="5" fill="#7a82e8" /><path d="M11 14h17.500v12a8.700 8.700 0 0 1-17.500 0z" fill="#7a82e8" /><rect x="0" y="9" width="18.500" height="18.500" rx="1" fill="#fbfbff" /><text x="9.200" y="24" text-anchor="middle" font-family="'Open Sans', sans-serif" font-weight="700" font-size="16" fill="#474fb5">T</text></svg>
          <svg v-else-if="a.icon === 'portrait'" width="36" height="36" viewBox="0 0 36 36"><rect width="36" height="36" fill="url(#gPort)" /><g fill="none" stroke="#e6eff8" stroke-width="1.500"><path d="M14 29H8V17A10.500 10.500 0 0 1 28 15l2 7-2 1v4q0 1-3 1.500h-3" /><path d="M14.500 23.500a7.500 7.500 0 1 1 7 0v3h-7zM11 26V17a7.500 8.500 0 0 1 14 0v6" /></g></svg>
          <svg v-else-if="a.icon === 'broom'" width="36" height="36" viewBox="0 0 36 36"><path d="M27 3.500l4-1 .5 3-5 10-3.500-1.500z" fill="#e59a30" /><path d="M21.500 12.500l6 2-1 3-6-2z" fill="#c9332a" /><path d="M20 14l7 3q1 10-4 17Q12 34 6 26q9-2 14-12z" fill="url(#gBroom)" /><path d="M12 27l6-5m-1 10l5-9" stroke="#c77a1c" /><path d="M3 6l5 7m0-7l-5 7M13 8l3 3m0-3l-3 3" stroke="#e8e8e8" stroke-width="1.300" /></svg>
          <svg v-else-if="a.icon === 'git'" width="36" height="36" viewBox="0 0 36 36"><path d="M18 0l9 9-9 9-9-9z" fill="#f77d7c" /><path d="M9 9l9 9-9 9-9-9z" fill="#80b3ff" /><path d="M27 9l9 9-9 9-9-9z" fill="#8cd35f" /><path d="M18 18l9 9-9 9-9-9z" fill="#ffdc73" /><path d="M14 6l4 6v13M18 13l6 5" stroke="#20242c" stroke-width="2.600" fill="none" /><g fill="#20242c"><circle cx="18" cy="12" r="3" /><circle cx="25" cy="18" r="3.200" /><circle cx="18" cy="25" r="3.400" /></g></svg>
          <svg v-else-if="a.icon === 'vscode'" width="36" height="36" viewBox="0 0 36 36"><path d="M26 0l10 4.500v27L26 36l-1.500-1V1z" fill="url(#gCode)" /><path d="M26 0v9.500L4 26.500l-3.500-2.500q-1-1.200 0-2.200z" fill="#1580c8" /><path d="M26 36v-9.500L4 9.500.5 12q-1 1.200 0 2.200z" fill="#1a93db" /></svg>
          <svg v-else width="36" height="36" fill="#25d366"><use href="#whatsappMark" /></svg>
          <b v-if="a.state === 'active'" class="task-badge">M</b>
          <i v-if="a.state" class="ind"></i>
        </span>
      </div>
      <div class="tray">
        <svg width="18" height="12" viewBox="0 0 18 12"><path d="M1.500 10.500L9 2.500l7.500 8" fill="none" stroke="#fff" stroke-width="2" /></svg>
        <svg class="kb" width="24" height="18" viewBox="0 0 24 18"><rect x="1" y="1" width="22" height="16" rx="2.500" fill="none" stroke="#fff" stroke-width="1.700" /><path d="M4.500 5.500h15M6 9h12" stroke="#fff" stroke-width="2" stroke-dasharray="2 1.700" /><path d="M6 13h12" stroke="#fff" stroke-width="1.700" /></svg>
        <svg class="pad" width="24" height="19" viewBox="0 0 24 19"><path d="M1 12h22M12 12v6" stroke="#fff" stroke-width="1.700" /><rect x="1" y="1" width="22" height="17" rx="3" fill="none" stroke="#fff" stroke-width="1.700" /></svg>
        <span class="lang">IND</span>
        <svg width="24" height="20" viewBox="0 0 24 20" fill="none" stroke-width="1.900"><path d="M1 8.500q11-12 22 0" stroke="#5b5e63" /><path d="M4 11.500q8-8.500 16 0M7.500 14.500q4.500-4.700 9 0" stroke="#fff" /><circle cx="12" cy="17" r="2.300" fill="#fff" /></svg>
        <svg class="vol" width="24" height="22" viewBox="0 0 24 22" fill="none" stroke="#fff" stroke-width="1.800"><path d="M1 7.500h4L10.500 2v18L5 14.500H1z" stroke-linejoin="round" /><path d="M13.500 7.500q2.500 3.500 0 7M16.500 4.500q5 6.500 0 13" /><path d="M19.500 2q7 9 0 18" stroke="#5b5e63" /></svg>
        <svg class="bat" width="25" height="17" viewBox="0 0 25 17"><rect x="1" y="1" width="19.500" height="15" rx="3.500" fill="none" stroke="#fff" stroke-width="1.800" /><path d="M21 6h1.500a1.500 1.500 0 0 1 1.500 1.500v2a1.500 1.500 0 0 1-1.500 1.500H21z" fill="#fff" /><rect x="3.500" y="3.700" width="4" height="9.600" rx="1" fill="#fff" /></svg>
        <div class="clock"><span>07.32.29</span><span>10/09/2024</span></div>
        <svg width="20" height="24" viewBox="0 0 20 24" fill="#f9a17d"><path d="M10 0a7.500 7.500 0 0 1 7.500 7.500V13l2.500 4.500v1.200H0v-1.200L2.500 13V7.500A7.500 7.500 0 0 1 10 0z" /><path d="M6 20.500h8q-1 3-4 3t-4-3z" /></svg>
      </div>
    </div>
  </div>
</template>

<style>
body {
  background: #1c1c1c;
  overflow: hidden;
}
</style>

<style scoped>
.desktop {
  width: 1920px;
  height: 1080px;
  display: flex;
  flex-direction: column;
  overflow: hidden;
  background: #1c1c1c;
  font-family: 'Open Sans', sans-serif;
}
.defs { position: absolute; }
svg { display: block; flex: none; }
.upper { display: flex; height: 1010px; flex: none; }
.edge { width: 12px; padding-top: 154px; box-sizing: border-box; flex: none; }
.edge-box {
  display: flex;
  align-items: center;
  height: 54px;
  margin-left: 7px;
  border-radius: 6px 0 0 6px;
  background: #282828;
}
.edge-box i { width: 5px; height: 24px; border-radius: 3px; background: #1a9a56; }
.window {
  flex: 1;
  min-width: 0;
  margin-top: 3px;
  border-left: 2px solid #434444;
  border-top: 2px solid #434444;
  border-bottom: 2px solid #41434a;
  border-top-left-radius: 11px;
  overflow: hidden;
  background: #202221;
  display: flex;
  flex-direction: column;
}

/* tab strip */
.tabstrip { height: 58px; flex: none; display: flex; align-items: flex-start; background: #202221; }
.tabsearch {
  width: 42px;
  height: 42px;
  margin: 7px 5px 0 9px;
  border-radius: 14px;
  background: #3b3c3b;
  display: grid;
  place-items: center;
}
.tabs { display: flex; height: 58px; }
.tab {
  width: 256px;
  height: 58px;
  box-sizing: border-box;
  padding: 0 22px 0 17px;
  display: flex;
  align-items: center;
  position: relative;
  color: #c4c5c4;
}
.tab::after {
  content: '';
  position: absolute;
  right: -1.5px;
  top: 17px;
  width: 3px;
  height: 24px;
  border-radius: 2px;
  background: #3d3f3e;
}
.tab.nosep::after { display: none; }
.tab.active { color: #e4e4e4; }
.tab-bg {
  position: absolute;
  left: 5px;
  right: 4px;
  top: 7px;
  bottom: 0;
  background: #3c3c3c;
  border-radius: 15px 15px 0 0;
}
.tab-bg::before,
.tab-bg::after {
  content: '';
  position: absolute;
  bottom: 0;
  width: 15px;
  height: 15px;
}
.tab-bg::before { left: -15px; background: radial-gradient(circle at 0 0, transparent 14.5px, #3c3c3c 15px); }
.tab-bg::after { right: -15px; background: radial-gradient(circle at 100% 0, transparent 14.5px, #3c3c3c 15px); }
.fav { width: 22px; display: flex; justify-content: center; position: relative; flex: none; margin-top: -2px; }
.tab-title {
  flex: 1;
  min-width: 0;
  margin: 0 13px 0 13px;
  font-size: 18px;
  letter-spacing: -0.55px;
  line-height: 26px;
  white-space: nowrap;
  overflow: hidden;
  position: relative;
  -webkit-mask-image: linear-gradient(90deg, #000 122px, transparent 154px);
  mask-image: linear-gradient(90deg, #000 122px, transparent 154px);
}
.tab-x { position: relative; color: #d0d1d0; margin-top: -2px; }
.plus { margin: 20px 0 0 15px; }
.winctl { margin: 21px 10px 0 auto; display: flex; gap: 52px; }

/* toolbar */
.toolbar {
  height: 69px;
  flex: none;
  border-bottom: 2px solid #464646;
  background: #3c3c3c;
  border-top-left-radius: 12px;
  display: flex;
  align-items: center;
}
.navs { display: flex; gap: 34px; padding-left: 23px; width: 157px; }
.omnibox {
  width: 1266px;
  height: 51px;
  box-sizing: border-box;
  border-radius: 26px;
  background: #282828;
  display: flex;
  align-items: center;
  padding: 0 24px 0 8px;
}
.siteinfo { width: 36px; height: 36px; border-radius: 50%; background: #3c3c3c; display: grid; place-items: center; }
.url { margin: 0 0 1px 11px; font-size: 20.5px; line-height: 30px; color: #c9cac9; white-space: nowrap; }
.url b { font-weight: 400; color: #f0f0f0; letter-spacing: -0.5px; }
.url i { font-style: normal; letter-spacing: -0.14px; }
.eye { margin: 0 22px 0 auto; }
.exts { display: flex; align-items: center; margin-left: 19px; }
.exts > svg:nth-child(2) { margin-left: 21px; }
.exts > svg:nth-child(3) { margin-left: 32px; }
.exts > svg:nth-child(4) { margin-left: 30px; }
.exts > svg:nth-child(5) { margin-left: 29px; }
.exts > svg:nth-child(6) { margin-left: 29px; margin-top: -4px; }
.newext { width: 40px; height: 36px; display: flex; flex-direction: column; align-items: center; margin-top: 14px; }
.newext b {
  width: 40px;
  height: 22px;
  margin-top: -3px;
  border-radius: 5px;
  background: #3fb76b;
  color: #fff;
  font-size: 13.5px;
  line-height: 22px;
  text-align: center;
  position: relative;
}
.tsep { width: 3px; height: 23px; margin-left: 25px; border-radius: 2px; background: #5c5d5c; }
.avatar {
  width: 30px;
  height: 30px;
  margin-left: 24px;
  border-radius: 50%;
  background: #c2185b;
  color: #fff;
  font: 16px/30px Roboto, sans-serif;
  text-align: center;
}
.dots { margin-left: 36px; }

/* web page */
.page {
  flex: 1;
  min-height: 0;
  position: relative;
  overflow: hidden;
  background: #e7e8e2;
  font-family: Inter, 'Open Sans', sans-serif;
  font-feature-settings: 'cv11' 1;
  color: #000;
}
.site-head {
  position: absolute;
  inset: 0 0 auto 0;
  z-index: 2;
  height: 123px;
  box-sizing: border-box;
  padding: 0 32px 0 33px;
  display: grid;
  grid-template-columns: 1fr auto 1fr;
  align-items: center;
  background: rgba(199, 199, 199, 0.81);
  box-shadow: 0 9px 22px -3px rgba(0, 0, 0, 0.42);
}
.head-logo { margin-top: -6px; }
.head-name text,
.brand-name text {
  font-family: 'DejaVu Serif', 'Liberation Serif', serif;
  font-weight: 700;
  font-size: 27.5px;
  fill: #46290b;
  stroke: #46290b;
  stroke-width: 1.2px;
}
.brand-name text { font-size: 28.5px; }
.head-name { margin-left: -2px; margin-top: -4px; }
.head-icons { display: flex; justify-content: flex-end; align-items: center; gap: 20px; margin-top: -3px; }
.form {
  margin: 0 197px 0 202px;
  height: 214px;
  box-sizing: border-box;
  padding: 0 30px 30px;
  background: #cbe1df;
  display: flex;
  flex-direction: column;
  align-items: center;
}
.field {
  width: 100%;
  height: 65px;
  flex: none;
  box-sizing: border-box;
  padding-left: 22px;
  border-radius: 33px;
  background: #fff;
  color: #6b6b6b;
  font-size: 20px;
  letter-spacing: 0.18px;
  line-height: 64px;
}
.field.first { margin: -56px 0 15px; }
.send {
  width: 300px;
  height: 50px;
  margin-top: 45px;
  border: 0;
  border-radius: 25px;
  background: #efefef;
  font: inherit;
  font-feature-settings: inherit;
  font-size: 20px;
  letter-spacing: 0.2px;
  color: #000;
  padding: 0 2px 2px 0;
}
.foot {
  height: 488px;
  margin-top: 105px;
  box-sizing: border-box;
  padding: 0 73px 0 78px;
  border-radius: 38px 38px 0 0;
  background: #cdd0c9;
  display: grid;
  grid-template-columns: 555px 1fr 555px;
}
.brand { padding-top: 62px; }
.brand-row { display: flex; align-items: center; padding-left: 4px; height: 88px; }
.brand-name { margin: -7px 0 0 18px; }
.brand p {
  margin: 18px 0 0 -1px;
  font-size: 27px;
  line-height: 27px;
  letter-spacing: 0.82px;
}
.socials { display: flex; gap: 7px; margin-top: 16px; }
.socials span { width: 66px; height: 66px; border-radius: 50%; background: #fff; display: grid; place-items: center; padding-right: 1px; box-sizing: border-box; }
.quick, .place { display: flex; flex-direction: column; align-items: center; }
h2 { margin: 60px 0 0; font-size: 37px; line-height: 54px; font-weight: 700; letter-spacing: 0.27px; }
.quick a { font-size: 24px; line-height: 39px; letter-spacing: 0.5px; color: #551a8b; }
.quick h2 + a { margin-top: 7px; }
.map { position: relative; margin-top: 16px; height: 225px; width: 555px; overflow: hidden; font-feature-settings: normal; }
.halo text { paint-order: stroke; stroke: #f7f6f8; stroke-width: 3px; stroke-linejoin: round; }
.map .google { font-family: Lato, sans-serif; font-weight: 500; paint-order: stroke; stroke: #fff; stroke-width: 2px; }
.bigger {
  position: absolute;
  left: 15px;
  top: 15px;
  width: 216px;
  height: 40px;
  border-radius: 3px;
  background: #fff;
  box-shadow: 0 1px 5px rgba(0, 0, 0, 0.3);
  font: 400 18px/40px Roboto, sans-serif;
  text-align: center;
  color: #1a73e8;
}
.place p { margin: 15px 0 0; font-size: 20px; line-height: 29px; font-weight: 700; letter-spacing: 0.12px; text-align: center; white-space: nowrap; }
.copy { height: 67px; padding-top: 21px; box-sizing: border-box; background: #fff; text-align: center; font-size: 24px; line-height: 39px; letter-spacing: 0.62px; }
.floaters { position: absolute; right: 0; bottom: 0; width: 67px; display: flex; flex-direction: column; align-items: flex-end; gap: 9px; }
.fl {
  width: 56px;
  height: 56px;
  margin-right: 1px;
  border-radius: 50%;
  background: #f8f8f8;
  box-shadow: 0 2px 9px rgba(0, 0, 0, 0.22);
  display: grid;
  place-items: center;
}
.fl.book { padding-top: 2px; box-sizing: border-box; }
.fl.big { width: 67px; height: 66px; margin: 4px 0 0; border-radius: 33px 0 0 33px; padding-left: 11px; box-sizing: border-box; }

/* taskbar */
.taskbar {
  height: 70px;
  flex: none;
  position: relative;
  display: flex;
  align-items: flex-start;
  background: linear-gradient(90deg, #20252c 0, #20252c 280px, #122557 440px, #122457 760px, #1d2140 960px, #20222d 1130px, #1e2138 1330px, #20242c 1440px);
}
.weather { width: 179px; padding: 18px 0 0 33px; position: relative; box-sizing: content-box; }
.weather b {
  position: absolute;
  left: 47px;
  top: 8px;
  width: 24px;
  height: 24px;
  border-radius: 50%;
  background: #ff99a4;
  font: 400 16px/24px 'Open Sans', sans-serif;
  color: #111;
  text-align: center;
}
.tasks { display: flex; gap: 6px; }
.task { width: 60px; height: 60px; box-sizing: border-box; margin-top: 4px; padding-top: 12px; display: flex; justify-content: center; position: relative; border-radius: 6px; }
.task.active { background: #333542; box-shadow: inset 0 0 0 1px #40424e; }
.ind { position: absolute; bottom: 1px; left: 26px; width: 9px; height: 5px; border-radius: 3px; background: #9496a4; }
.task.active .ind { left: 18px; width: 24px; background: #f7866b; }
.task-badge {
  position: absolute;
  left: 31px;
  top: 5px;
  width: 25px;
  height: 25px;
  border-radius: 50%;
  background: #c2185b;
  color: #f5dbe6;
  font: 500 14px/25px Roboto, sans-serif;
  text-align: center;
}
.tray { margin-left: auto; padding-right: 32px; height: 68px; display: flex; align-items: center; color: #fff; }
.kb { margin-left: 27px; }
.pad { margin-left: 24px; }
.lang { margin: 0 30px 0 30px; font-size: 18px; letter-spacing: -0.5px; }
.vol { margin-left: 11px; }
.bat { margin-left: 13px; }
.clock { width: 93px; margin: 0 13px 0 24px; display: flex; flex-direction: column; align-items: flex-end; font-size: 18px; line-height: 24.5px; letter-spacing: -0.3px; white-space: nowrap; }
</style>
